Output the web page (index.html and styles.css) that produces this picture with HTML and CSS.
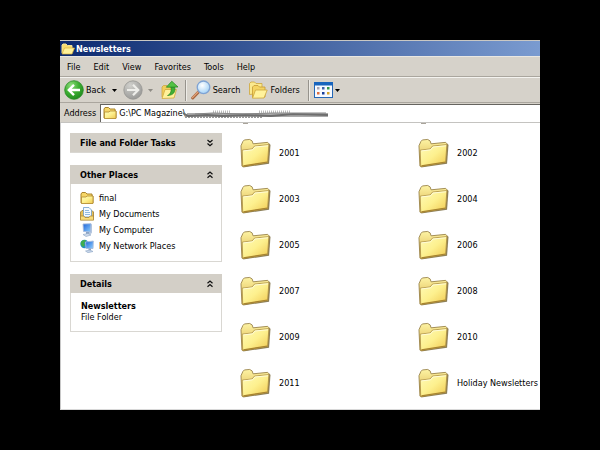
FILE: index.html
```html
<!DOCTYPE html>
<html lang="en">
<head>
<meta charset="utf-8">
<title>Newsletters</title>
<link rel="stylesheet" href="styles.css">
</head>
<body>
<svg class="defs" aria-hidden="true">
  <defs>
    <linearGradient id="front" x1="0" y1="0" x2="1" y2="1">
      <stop offset="0" stop-color="#fffbb8"/><stop offset=".5" stop-color="#fdf08e"/><stop offset="1" stop-color="#f0c850"/>
    </linearGradient>
    <linearGradient id="back" x1="0" y1="0" x2="0" y2="1">
      <stop offset="0" stop-color="#fdf3a4"/><stop offset="1" stop-color="#d9ae42"/>
    </linearGradient>
    <radialGradient id="green" cx=".35" cy=".25" r=".8">
      <stop offset="0" stop-color="#8fdc7c"/><stop offset=".5" stop-color="#3fb034"/><stop offset="1" stop-color="#1d8a1c"/>
    </radialGradient>
    <radialGradient id="grey" cx=".35" cy=".25" r=".8">
      <stop offset="0" stop-color="#d0d0cc"/><stop offset="1" stop-color="#989896"/>
    </radialGradient>
    <radialGradient id="lens" cx=".4" cy=".35" r=".7">
      <stop offset="0" stop-color="#ffffff"/><stop offset="1" stop-color="#9fd0f6"/>
    </radialGradient>
    <linearGradient id="screen" x1="0" y1="0" x2="1" y2="1">
      <stop offset="0" stop-color="#1d62d8"/><stop offset="1" stop-color="#8fd0ff"/>
    </linearGradient>
    <symbol id="folder" viewBox="0 0 32 32">
      <path d="M3 30.500 30 26.500 31.500 7 29 5.500Z" fill="#6f5f30" opacity=".8"/>
      <path d="M2 29 1 8 3 3.500 4.500 2 10 1.500 12.500 3 13.500 6 28.500 4.500 30 6 28.500 25 3 29.500Z" fill="url(#back)" stroke="#968046" stroke-width=".9"/>
      <path d="M2.800 29.500 2.300 12.500 12.500 11.300 15 8.300 29.800 6.800 28.500 25.200Z" fill="url(#front)" stroke="#a98c42" stroke-width=".8"/>
      <path d="M3.500 28.800 28.300 24.800" stroke="#a8842f" stroke-width="1.200"/>
      <path d="M3.500 13.300 13 12.200 15.500 9.300 29 8" fill="none" stroke="#fffde0" stroke-width=".9"/>
    </symbol>
    <symbol id="small" viewBox="0 0 14 14">
      <path d="M1 12V3L2 1.500H5.500L7 3H12V5H13V12Z" fill="#f6d667" stroke="#aa842c"/>
      <path d="M1.500 12.500V6H6L7 5H13V12.500Z" fill="url(#front)" stroke="#b28c30" stroke-width=".8"/>
    </symbol>
    <symbol id="down" viewBox="0 0 8 8"><path d="M1.500 1 4 3.300 6.500 1M1.500 4.500 4 6.800 6.500 4.500" fill="none" stroke="#111" stroke-width="1.200"/></symbol>
    <symbol id="up" viewBox="0 0 8 8"><path d="M1.500 3.300 4 1 6.500 3.300M1.500 6.800 4 4.500 6.500 6.800" fill="none" stroke="#111" stroke-width="1.200"/></symbol>
    <symbol id="caret" viewBox="0 0 5 3"><path d="M0 0H5L2.500 3Z" fill="currentColor"/></symbol>
  </defs>
</svg>
<main class="window">
  <header class="titlebar">
    <svg class="icon-s" viewBox="0 0 14 14"><path d="M1 11V3L2 2H5L6.500 3.500H11V6" fill="#f7dc70" stroke="#f4e295"/><path d="M1 12 3.500 6H13.500L11 12Z" fill="#fff29a" stroke="#dab23e" stroke-width=".7"/></svg>
    <h1>Newsletters</h1>
  </header>
  <nav class="menubar" aria-label="Menu">
    <button type="button">File</button>
    <button type="button">Edit</button>
    <button type="button">View</button>
    <button type="button">Favorites</button>
    <button type="button">Tools</button>
    <button type="button">Help</button>
  </nav>
  <div class="toolbar">
    <button type="button" class="back">
      <svg class="icon-l" viewBox="0 0 20 20"><circle cx="10" cy="10" r="9.300" fill="url(#green)" stroke="#2b8a27" stroke-width=".8"/><path d="M16 10H5M10 4.800 4.800 10 10 15.200" fill="none" stroke="#fff" stroke-width="2.400"/></svg>
      Back
      <svg class="caret"><use href="#caret"/></svg>
    </button>
    <button type="button" class="forward" aria-label="Forward">
      <svg class="icon-l" viewBox="0 0 20 20"><circle cx="10" cy="10" r="9.200" fill="url(#grey)" stroke="#959592" stroke-width=".8"/><path d="M4 10H15M10 4.800 15.200 10 10 15.200" fill="none" stroke="#eeeeea" stroke-width="2.200"/></svg>
      <svg class="caret"><use href="#caret"/></svg>
    </button>
    <button type="button" class="parent" aria-label="Up">
      <svg class="icon-l" viewBox="0 0 20 20"><path d="M1 17V7L2.500 5.500H6L7.500 7H12V16Z" fill="#f2ce5c" stroke="#c9a03a" stroke-width=".7"/><path d="M1 18.500 4 9.500H15.500L13 18Z" fill="#fff19a" stroke="#d2a93c" stroke-width=".8"/><path d="M6.500 15.500C10 14 10.500 10.500 9.800 7H13.700C15 11.500 12.500 15.500 6.500 15.500Z" fill="#3fae35" stroke="#23821f" stroke-width=".6"/><path d="M5.300 7.200 10.800 1.200 17 7Z" fill="#52c244" stroke="#23821f" stroke-width=".7"/></svg>
    </button>
    <span class="divider"></span>
    <button type="button" class="search">
      <svg class="icon-l" viewBox="0 0 20 20"><path d="M1.700 18 7.500 12" stroke="#a8663e" stroke-width="3" stroke-linecap="round"/><path d="M1.500 17.600 7 12" stroke="#e2a47c" stroke-width="1.200" stroke-linecap="round"/><circle cx="12.500" cy="7.300" r="6.300" fill="url(#lens)" stroke="#7fa3d3" stroke-width="1.300"/></svg>
      Search
    </button>
    <button type="button" class="folders">
      <svg class="icon-l" viewBox="0 0 20 20"><path d="M1.500 14.500V3.500L3 2H6.500L8 3.500H14V13Z" fill="#fae98e" stroke="#cda63c" stroke-width=".8"/><path d="M4.500 17.500V7L6 5.500H10L11.500 7H17V17Z" fill="#f4d462" stroke="#c69b34" stroke-width=".8"/><path d="M4.500 18.200 7.500 10H19.200L16 18Z" fill="#fff29c" stroke="#cda63c" stroke-width=".8"/></svg>
      Folders
    </button>
    <span class="divider"></span>
    <button type="button" class="views" aria-label="Views">
      <svg class="icon-v" viewBox="0 0 19 16"><rect x=".5" y=".5" width="18" height="15" fill="#f7faff" stroke="#2467b6"/><path d="M0 0H19V3.500H0Z" fill="#1764bd"/><path d="M3 5h2.500v2.500H3z" fill="#a9a6b2"/><path d="M8 5h2.500v2.500H8z" fill="#3c62a9"/><path d="M13 5h2.500v2.500H13z" fill="#35964a"/><path d="M3 10h2.500v2.500H3z" fill="#df7040"/><path d="M8 10h2.500v2.500H8z" fill="#173f9b"/><path d="M13 10h2.500v2.500H13z" fill="#d4a52e"/></svg>
      <svg class="caret"><use href="#caret"/></svg>
    </button>
  </div>
  <div class="addressbar">
    <label for="address">Address</label>
    <div class="field">
      <svg class="icon-s"><use href="#small"/></svg>
      <input id="address" type="text" value="G:\PC Magazine\">
      <svg class="scribble" viewBox="0 0 146 12" aria-hidden="true">
        <g fill="none"><path d="M4 7H145" stroke="#aaa" stroke-width="4"/><path d="M30 4H48M76 4H108" stroke="#bbb" stroke-width="3" stroke-dasharray="1 1"/><path d="M2 9H80" stroke="#999" stroke-width="2" stroke-dasharray="2 1"/><path d="M0 5 5 8 24 7 40 8 62 7 88 8 110 6 145 7" stroke="#6e6e6e" stroke-width="2"/><path d="M12 6 30 5 60 6 90 5 110 5 143 5" stroke="#888"/></g>
      </svg>
    </div>
  </div>
  <div class="content">
    <aside class="sidebar">
      <section class="panel">
        <h2><button type="button">File and Folder Tasks <svg class="chevron"><use href="#down"/></svg></button></h2>
      </section>
      <section class="panel">
        <h2><button type="button">Other Places <svg class="chevron"><use href="#up"/></svg></button></h2>
        <ul class="places">
          <li><a href="#"><svg class="icon-s"><use href="#small"/></svg>final</a></li>
          <li><a href="#"><svg class="icon-s" viewBox="0 0 14 14"><path d="M.5 12.500V5L2 3.500H12L13.500 5V12.500Z" fill="#e6bf55" stroke="#9c7a31" stroke-width=".8"/><path d="M3.500.5H9L11.500 3V10H3.500Z" fill="#f4faff" stroke="#6c9ccb" stroke-width=".8"/><path d="M5 3.500H9M5 5.500H10M5 7.500H10" stroke="#77aadb" stroke-width=".8"/><path d="M.5 13.200V9H4L5 10.500H9L10 9H13.500V13.200Z" fill="#f8dc7b" stroke="#a78335" stroke-width=".7"/></svg>My Documents</a></li>
          <li><a href="#"><svg class="icon-s" viewBox="0 0 14 14"><path d="M9 2 12 1V10L9 12Z" fill="#b8c8df"/><path d="M3 1 11 .7 10.500 9 3.500 8.500Z" fill="url(#screen)" stroke="#a6badb" stroke-width=".9"/><path d="M6 9H9V11H6Z" fill="#8da4c4"/><path d="M3 11.500 8 10.500 11 12 6 13.500Z" fill="#d2deee" stroke="#8aa2c2" stroke-width=".6"/></svg>My Computer</a></li>
          <li><a href="#"><svg class="icon-s" viewBox="0 0 14 14"><circle cx="4.500" cy="5" r="4.200" fill="#238dc9"/><path d="M1 3C3 0 6 1 6 2L4 4 5 6 3 8Q0 6 1 3Z" fill="#40ad4e"/><path d="M5.500 3 13.300 2 13 9.500 6 9.500Z" fill="url(#screen)" stroke="#a6badb" stroke-width=".9"/><path d="M8.500 9.500H11V11.500H8.500Z" fill="#8da4c4"/><path d="M5.500 12 10 11 13 12.500 8 13.700Z" fill="#c8d7eb" stroke="#8aa2c2" stroke-width=".6"/></svg>My Network Places</a></li>
        </ul>
      </section>
      <section class="panel">
        <h2><button type="button">Details <svg class="chevron"><use href="#up"/></svg></button></h2>
        <div class="details"><strong>Newsletters</strong><p>File Folder</p></div>
      </section>
    </aside>
    <ul class="files">
      <li><svg><use href="#folder"/></svg>2001</li>
      <li><svg><use href="#folder"/></svg>2002</li>
      <li><svg><use href="#folder"/></svg>2003</li>
      <li><svg><use href="#folder"/></svg>2004</li>
      <li><svg><use href="#folder"/></svg>2005</li>
      <li><svg><use href="#folder"/></svg>2006</li>
      <li><svg><use href="#folder"/></svg>2007</li>
      <li><svg><use href="#folder"/></svg>2008</li>
      <li><svg><use href="#folder"/></svg>2009</li>
      <li><svg><use href="#folder"/></svg>2010</li>
      <li><svg><use href="#folder"/></svg>2011</li>
      <li><svg><use href="#folder"/></svg>Holiday Newsletters</li>
    </ul>
  </div>
</main>
</body>
</html>
```
FILE: styles.css
```css
* { box-sizing: border-box; }

body {
  margin: 0;
  padding: 40px 60px;
  min-height: 100vh;
  display: flex;
  background: #000;
  color: #000;
  font: 9px/12px "DejaVu Sans Condensed", "DejaVu Sans", sans-serif;
}

h1, h2, p, ul { margin: 0; padding: 0; font-size: inherit; }
ul { list-style: none; }

button, input {
  margin: 0;
  padding: 0;
  border: 0;
  background: none;
  color: inherit;
  font: inherit;
}

a { color: inherit; text-decoration: none; }
svg { display: block; flex: none; }
.defs { position: absolute; width: 0; height: 0; }
.icon-s { width: 14px; height: 14px; }
.icon-l { width: 20px; height: 20px; }
.icon-v { width: 19px; height: 16px; }
.caret { width: 5px; height: 3px; }
.chevron { width: 8px; height: 8px; }

.window {
  flex: 1;
  min-width: 0;
  display: flex;
  flex-direction: column;
  background: #fff;
}

.titlebar {
  display: flex;
  align-items: center;
  gap: 1px;
  height: 16px;
  padding-left: 1px;
  border-top: 1px solid #c9c8c4;
  background: linear-gradient(90deg, #0c2a70, #7a9bd0);
  color: #fff;
}

.menubar {
  display: flex;
  align-items: center;
  gap: 13px;
  height: 21px;
  padding-left: 7px;
  background: #d6d2ca;
  border-top: 1px solid #e9e7e2;
  border-bottom: 1px solid #aaa69e;
}

.toolbar {
  display: flex;
  align-items: center;
  height: 26px;
  padding-left: 4px;
  background: #d6d2ca;
  border-top: 1px solid #f4f3ef;
  border-bottom: 1px solid #aaa69e;
}

.toolbar button { display: flex; align-items: center; }
.back { gap: 2px; }
.back .caret { margin-left: 4px; }
.forward { gap: 5px; margin-left: 6px; color: #8e8b85; }
.parent { margin-left: 8px; }
.divider { width: 2px; height: 21px; margin: 0 4px; border-left: 1px solid #96938c; border-right: 1px solid #eeece7; }
.search { gap: 2px; }
.folders { gap: 2px; margin-left: 8px; margin-right: 4px; }
.views { gap: 2px; }

.addressbar {
  display: flex;
  align-items: center;
  gap: 4px;
  height: 20px;
  padding-left: 4px;
  background: #d6d2ca;
  border-bottom: 1px solid #c4c3c0;
}

.field {
  position: relative;
  flex: 1;
  display: flex;
  align-items: center;
  gap: 2px;
  height: 18px;
  padding-left: 2px;
  background: #fff;
  border-top: 1px solid #66645f;
  border-left: 1px solid #66645f;
}

.field input { flex: 1; min-width: 0; }
.scribble { position: absolute; left: 82px; top: 3px; width: 146px; height: 12px; }

.content {
  flex: 1;
  display: flex;
  gap: 18px;
  border-left: 1px solid #c8c8c8;
  border-bottom: 1px solid #d8d8d8;
}

.sidebar {
  width: 161px;
  flex: none;
  display: flex;
  flex-direction: column;
  gap: 12px;
  padding: 10px 0 0 9px;
}

.panel { border: 1px solid #d9d7d2; border-top: 0; }
.panel h2 { margin: 0 -1px; background: #d3cfc7; }
.panel h2 button {
  display: flex;
  align-items: center;
  justify-content: space-between;
  width: 100%;
  height: 19px;
  padding: 0 8px 0 10px;
}

.places { display: grid; gap: 2px; padding: 7px 9px 8px; }
.places a { display: flex; align-items: center; gap: 5px; }
.details { padding: 8px 10px; line-height: 11px; }

.files {
  position: relative;
  flex: 1;
  display: grid;
  grid-template-columns: 178px 1fr;
  grid-auto-rows: 46px;
  align-content: start;
  padding-top: 7px;
}

/* bottom tips of the folders scrolled out of view */
.files::before,
.files::after {
  content: "";
  position: absolute;
  top: 0;
  left: 3px;
  width: 5px;
  height: 1px;
  background: #a9a49a;
}
.files::after { left: 181px; }

.files li { display: flex; align-items: center; gap: 8px; white-space: nowrap; }
.files svg { width: 31px; height: 31px; }
```
